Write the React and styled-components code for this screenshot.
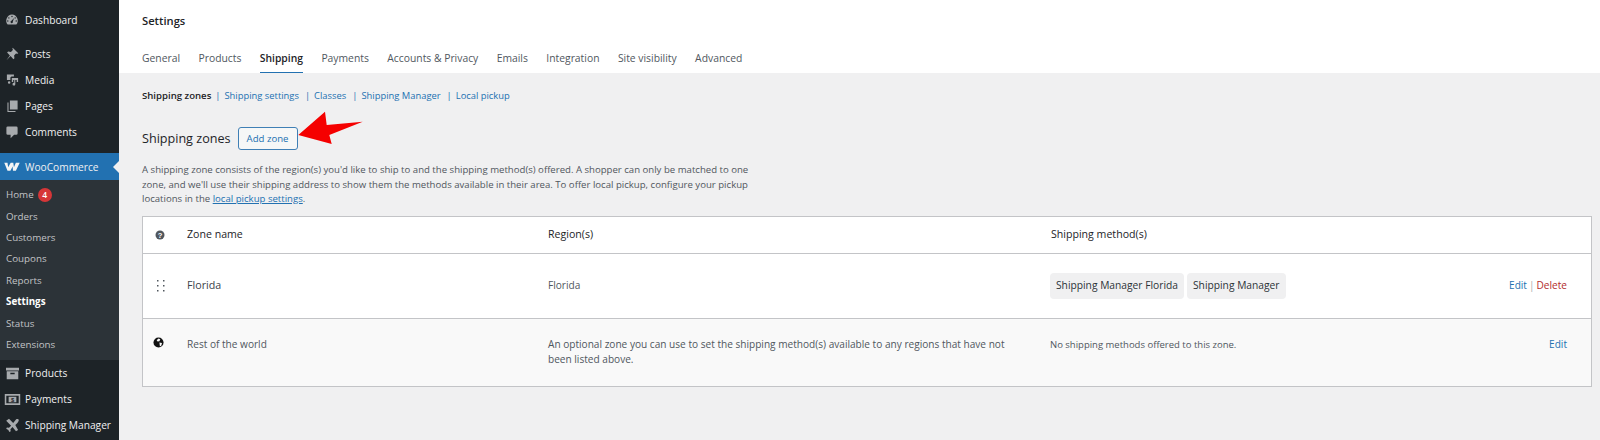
import styled, { createGlobalStyle } from 'styled-components';

const Global = createGlobalStyle`
  html, body { margin:0; padding:0; background:#f0f0f1; }
  body { font-family:"Open Sans","Noto Sans",sans-serif; font-size:10px; color:#1d2327; }
  #root { width:1600px; height:440px; overflow:hidden; }
  * { box-sizing:border-box; }
`
const Page = styled.div`
  display:flex;
  width:1600px;
  height:440px;
`
const Sidebar = styled.nav`
  width:119px;
  flex:none;
  background:#1d2327;
  padding-top:7px;
  display:flex;
  flex-direction:column;
`
const MenuItem = styled.div`
  position:relative;
  display:flex;
  align-items:center;
  height:${p => p.$h || 26}px;
  margin-bottom:${p => p.$mb || 0}px;
  padding-left:5px;
  gap:6px;
  font-size:10.2px;
  color:#f0f0f1;
  background:${p => p.$active ? '#2271b1' : 'transparent'};
`
const IconBox = styled.span`
  width:14px;
  height:14px;
  flex:none;
  display:flex;
  align-items:center;
  justify-content:center;
  svg { display:block; flex:none; }
`
const Notch = styled.span`
  position:absolute;
  right:0;
  top:50%;
  margin-top:-6px;
  border:6px solid transparent;
  border-right-color:#f0f0f1;
  border-left-width:0;
`
const Submenu = styled.div`
  background:#2c3338;
  padding:4px 0 5px;
  display:flex;
  flex-direction:column;
`
const SubItem = styled.div`
  height:21.4px;
  display:flex;
  align-items:center;
  gap:4px;
  padding-left:6px;
  font-size:9.8px;
  font-weight:${p => p.$current ? 700 : 400};
  color:${p => p.$current ? '#ffffff' : '#c3c4c7'};
`
const Badge = styled.span`
  width:14px;
  height:14px;
  border-radius:50%;
  background:#d63638;
  color:#fff;
  font-size:8.5px;
  font-weight:600;
  display:flex;
  align-items:center;
  justify-content:center;
`
const Main = styled.main`
  flex:1;
  min-width:0;
`
const Header = styled.header`
  height:73px;
  background:#fff;
  padding:14px 0 0 23px;
`
const Title = styled.div`
  font-size:11.2px;
  font-weight:600;
  line-height:14px;
  color:#1d2327;
`
const Tabs = styled.div`
  display:flex;
  gap:18.4px;
  margin-top:16px;
`
const Tab = styled.div`
  height:29px;
  padding-top:7px;
  font-size:10.35px;
  line-height:14px;
  color:${p => p.$on ? '#1d2327' : '#50575e'};
  font-weight:${p => p.$on ? 600 : 400};
  border-bottom:${p => p.$on ? '1px solid #2271b1' : '0'};
`
const Body = styled.div`
  padding:15px 8px 0 23px;
`
const SubNav = styled.div`
  display:flex;
  align-items:center;
  height:14px;
  font-size:9.4px;
  color:#50575e;
`
const Current = styled.strong`
  font-weight:600;
  font-size:9.6px;
  color:#1d2327;
`
const Link = styled.a`
  color:${p => p.$danger ? '#b32d2e' : '#2271b1'};
  text-decoration:${p => p.$line ? 'underline' : 'none'};
`
const Sep = styled.span`
  margin:0 4px;
  color:#2271b1;
  ${Link} + & { margin-left:6px; }
`
const HeadingRow = styled.div`
  position:relative;
  display:flex;
  align-items:center;
  gap:7px;
  margin-top:25px;
  height:22px;
`
const H2 = styled.h2`
  margin:0;
  font-size:12.6px;
  font-weight:400;
  color:#1d2327;
`
const AddButton = styled.button`
  width:60px;
  height:23px;
  padding:0;
  font:9.6px "Open Sans","Noto Sans",sans-serif;
  color:#2271b1;
  background:#f6f7f7;
  border:1px solid #3f7fb5;
  border-radius:3px;
`
const Arrow = styled.svg`
  position:absolute;
  left:155px;
  top:-16px;
`
const Desc = styled.p`
  margin:14px 0 0;
  width:630px;
  font-size:9.6px;
  line-height:14.5px;
  color:#50575e;
`
const Table = styled.div`
  margin-top:9px;
  width:1450px;
  border:1px solid #c3c4c7;
  background:#fff;
`
const Row = styled.div`
  display:grid;
  grid-template-columns:44px 361px 502px 1fr;
  height:${p => p.$h}px;
  background:${p => p.$alt ? '#f9f9f9' : '#fff'};
  border-top:${p => p.$first ? '0' : '1px solid #c3c4c7'};
  font-size:10.1px;
  color:#50575e;
`
const Cell = styled.div`
  display:flex;
  align-items:${p => p.$top ? 'flex-start' : 'center'};
  padding-top:${p => p.$top ? 18 : 0}px;
  line-height:15px;
`
const HeadCell = styled(Cell)`
  color:#1d2327;
  font-size:10.6px;
`
const MethodHead = styled(HeadCell)`
  padding-left:1px;
`
const ZoneName = styled(Cell)`
  font-size:10.7px;
  color:#3c434a;
`
const IconCell = styled(Cell)`
  padding-left:${p => p.$left || 0}px;
`
const Methods = styled(Cell)`
  justify-content:space-between;
  padding-right:24px;
`
const Chips = styled.div`
  display:flex;
  gap:3px;
`
const Chip = styled.span`
  height:26px;
  padding:0 6px;
  display:flex;
  align-items:center;
  background:#f0f0f1;
  border-radius:4px;
  color:#2c3338;
  font-size:10.25px;
`
const Actions = styled.span`
  color:#a7aaad;
  display:flex;
  gap:2px;
`
const Note = styled.div`
  width:480px;
`
const Empty = styled.span`
  font-size:9.5px;
`

const ic = '#a7aaad'
const icons = {
  dash: <svg width="14" height="14" viewBox="0 0 20 20"><path fill={ic} d="M3.8 16.5A8.9 8.9 0 0 1 10 2a8.9 8.9 0 0 1 6.2 14.5zM10 4a1 1 0 1 0 0 2 1 1 0 0 0 0-2zM5.5 6a1 1 0 1 0 0 2 1 1 0 0 0 0-2zm9 0a1 1 0 1 0 0 2 1 1 0 0 0 0-2zM4 10.5a1 1 0 1 0 0 2 1 1 0 0 0 0-2zm12 0a1 1 0 1 0 0 2 1 1 0 0 0 0-2zM13 7l-3.8 4.2a1.7 1.7 0 1 0 2 1z" fillRule="evenodd"/></svg>,
  pin: <svg width="14" height="14" viewBox="0 0 20 20"><path fill={ic} d="M11 1l8 8-2 1-1-1-3 3 .5 4-1.5 1.5L8 13l-6 6 5-7-4-4 1.5-1.5 4 .5 3-3-1-1z"/></svg>,
  media: <svg width="15" height="14" viewBox="0 0 20 20"><path fill={ic} d="M2 2h10v3H8.5L7 6.5V10H2zm7 5h9v6h-2v-3h-2v6a2 2 0 1 1-1.500-1.900V10H11v3H9zM7 13.5a1.800 1.800 0 1 1-3.600 0 1.800 1.800 0 0 1 3.600 0z"/></svg>,
  pages: <svg width="14" height="14" viewBox="0 0 20 20"><path fill={ic} d="M7 2h11v13H7zM5 5v12h10v1.500H3.500V5z"/></svg>,
  comment: <svg width="14" height="14" viewBox="0 0 20 20"><path fill={ic} d="M4 2h12a2 2 0 0 1 2 2v8a2 2 0 0 1-2 2h-3l-5 5v-5H4a2 2 0 0 1-2-2V4a2 2 0 0 1 2-2z"/></svg>,
  woo: <svg width="16" height="9" viewBox="0 0 24 14"><path fill="#f5f5f5" d="M0 1h5l1 7 4-7h4l1 7 3-7h6l-6 12.500h-4.500L13 7l-3.500 6.500H5z"/></svg>,
  box: <svg width="15" height="13" viewBox="0 0 20 18"><path fill={ic} d="M1 1h18v4H1zM2 6h16v11H2zm5 2v2h6V8z" fillRule="evenodd"/></svg>,
  pay: <svg width="17" height="13" viewBox="0 0 22 16"><path fill={ic} fillRule="evenodd" d="M1 1h20v14H1zm2 2v10h16V3zM6 4.500h10v7H6z"/><text x="11" y="11" textAnchor="middle" fontSize="7.500" fontWeight="700" fill="#1d2327" fontFamily="Liberation Sans">$</text></svg>,
  plane: <svg width="15" height="14" viewBox="0 0 20 20"><path fill={ic} d="M1 4l4-3 6 6 4-5c1-1 4-1 4 1 0 1-1 3-2 4l-3 3 4 7-3 2-5-6-3 3 .5 3-2 1-1.500-3-3-1.500 1-2 3 .5 3-3z"/></svg>,
}

const tabs = ['General', 'Products', 'Shipping', 'Payments', 'Accounts & Privacy', 'Emails', 'Integration', 'Site visibility', 'Advanced']
const subs = ['Orders', 'Customers', 'Coupons', 'Reports', 'Settings', 'Status', 'Extensions']

export default function App() {
  return (
    <Page>
      <Global />
      <Sidebar>
        <MenuItem $mb={8}><IconBox>{icons.dash}</IconBox>Dashboard</MenuItem>
        <MenuItem><IconBox>{icons.pin}</IconBox>Posts</MenuItem>
        <MenuItem><IconBox>{icons.media}</IconBox>Media</MenuItem>
        <MenuItem><IconBox>{icons.pages}</IconBox>Pages</MenuItem>
        <MenuItem $mb={8}><IconBox>{icons.comment}</IconBox>Comments</MenuItem>
        <MenuItem $active $h={27}><IconBox>{icons.woo}</IconBox>WooCommerce<Notch /></MenuItem>
        <Submenu>
          <SubItem>Home <Badge>4</Badge></SubItem>
          {subs.map(s => <SubItem key={s} $current={s === 'Settings'}>{s}</SubItem>)}
        </Submenu>
        <MenuItem><IconBox>{icons.box}</IconBox>Products</MenuItem>
        <MenuItem><IconBox>{icons.pay}</IconBox>Payments</MenuItem>
        <MenuItem><IconBox>{icons.plane}</IconBox>Shipping Manager</MenuItem>
      </Sidebar>
      <Main>
        <Header>
          <Title>Settings</Title>
          <Tabs>
            {tabs.map(t => <Tab key={t} $on={t === 'Shipping'}>{t}</Tab>)}
          </Tabs>
        </Header>
        <Body>
          <SubNav>
            <Current>Shipping zones</Current><Sep>|</Sep>
            <Link>Shipping settings</Link><Sep>|</Sep>
            <Link>Classes</Link><Sep>|</Sep>
            <Link>Shipping Manager</Link><Sep>|</Sep>
            <Link>Local pickup</Link>
          </SubNav>
          <HeadingRow>
            <H2>Shipping zones</H2>
            <AddButton>Add zone</AddButton>
            <Arrow width="67" height="35" viewBox="0 0 67 35">
              <path fill="#f50000" d="M1.300 24 L28 0.700 L29.700 14 L65.700 10.700 L32.300 24 L34.700 33 Z" />
            </Arrow>
          </HeadingRow>
          <Desc>
            A shipping zone consists of the region(s) you'd like to ship to and the shipping method(s) offered. A shopper can only be matched to one zone, and we'll use their shipping address to show them the methods available in their area. To offer local pickup, configure your pickup locations in the <Link $line>local pickup settings</Link>.
          </Desc>
          <Table>
            <Row $first $h={36}>
              <IconCell $left={12}>
                <svg width="10" height="10" viewBox="0 0 10 10"><circle cx="5" cy="5" r="4.500" fill="#50575e" /><text x="5" y="7.800" textAnchor="middle" fontSize="7.500" fontWeight="700" fill="#fff" fontFamily="Liberation Sans">?</text></svg>
              </IconCell>
              <HeadCell>Zone name</HeadCell>
              <HeadCell>Region(s)</HeadCell>
              <MethodHead>Shipping method(s)</MethodHead>
            </Row>
            <Row $h={65}>
              <IconCell $left={14}>
                <svg width="8" height="12" viewBox="0 0 8 12" fill="#50575e"><rect x="0" y="0" width="1.500" height="1.500" /><rect x="6" y="0" width="1.500" height="1.500" /><rect x="0" y="5" width="1.500" height="1.500" /><rect x="6" y="5" width="1.500" height="1.500" /><rect x="0" y="10" width="1.500" height="1.500" /><rect x="6" y="10" width="1.500" height="1.500" /></svg>
              </IconCell>
              <ZoneName>Florida</ZoneName>
              <Cell>Florida</Cell>
              <Methods>
                <Chips><Chip>Shipping Manager Florida</Chip><Chip>Shipping Manager</Chip></Chips>
                <Actions><Link>Edit</Link>|<Link $danger>Delete</Link></Actions>
              </Methods>
            </Row>
            <Row $alt $h={68}>
              <IconCell $top $left={10}>
                <svg width="11" height="11" viewBox="0 0 12 12"><circle cx="6" cy="6" r="5.500" fill="#111" /><path fill="#f9f9f9" d="M6 1.500l2 1-1 2-2 .5-1-1.500zM7 6l2.800.5L9 9.500 7.500 10.200z" /></svg>
              </IconCell>
              <Cell $top>Rest of the world</Cell>
              <Cell $top><Note>An optional zone you can use to set the shipping method(s) available to any regions that have not been listed above.</Note></Cell>
              <Methods $top>
                <Empty>No shipping methods offered to this zone.</Empty>
                <Actions><Link>Edit</Link></Actions>
              </Methods>
            </Row>
          </Table>
        </Body>
      </Main>
    </Page>
  )
}
